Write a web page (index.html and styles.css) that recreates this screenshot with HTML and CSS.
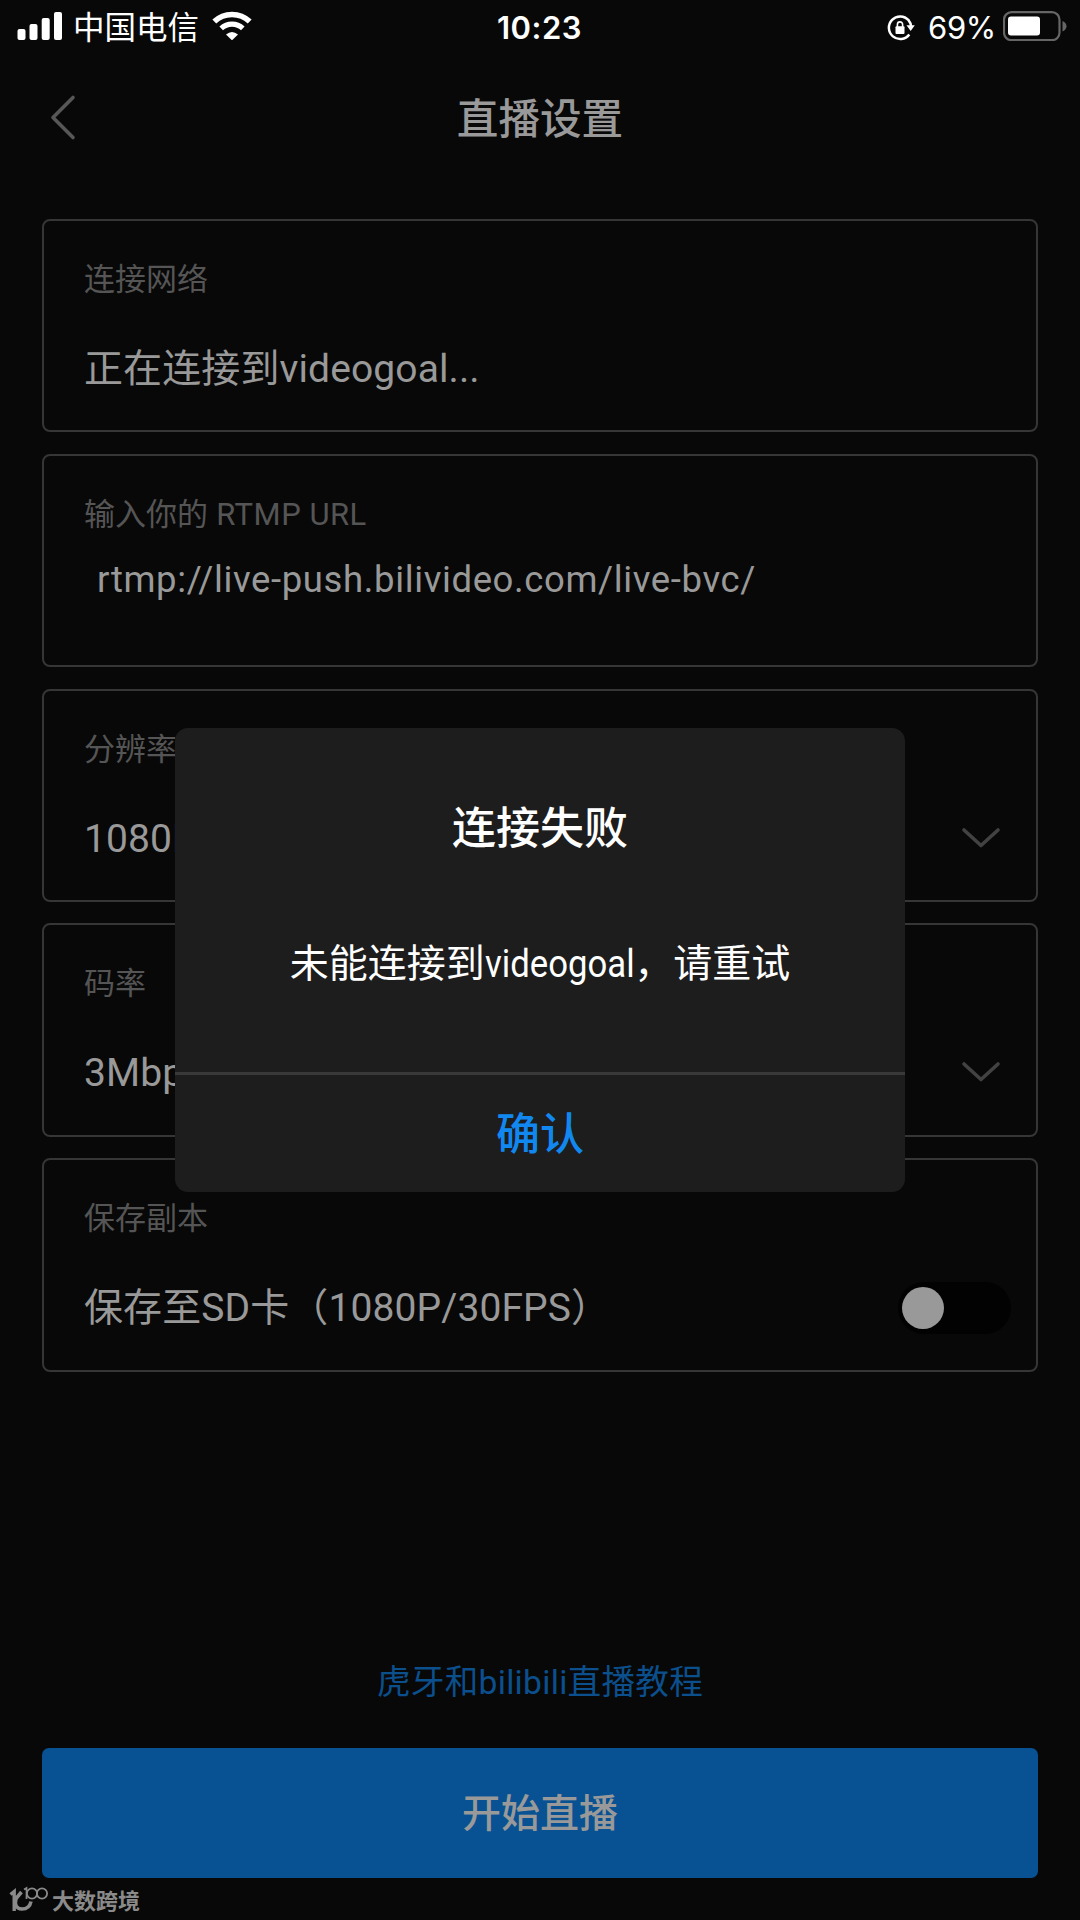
FILE: index.html
```html
<!DOCTYPE html>
<html lang="zh-CN">
<head>
<meta charset="utf-8">
<title>直播设置</title>
<link rel="stylesheet" href="styles.css">
</head>
<body>
<div class="screen">
  <header class="status">
    <div class="status-left">
      <svg class="signal" width="46" height="30" viewBox="0 0 46 30" fill="#fff">
        <rect x="0.5" y="18" width="8" height="11" rx="2"/>
        <rect x="12.5" y="13" width="8" height="16" rx="2"/>
        <rect x="24.7" y="7" width="8" height="22" rx="2"/>
        <rect x="37" y="1" width="8" height="28" rx="2"/>
      </svg>
      <span class="carrier">中国电信</span>
      <svg class="wifi" width="40" height="30" viewBox="0 0 40 30" fill="none" stroke="#fff">
        <path d="M2.3 10.6A25.5 25.5 0 0 1 37.7 10.6" stroke-width="5.600"/>
        <path d="M9.2 17.4A15.6 15.6 0 0 1 30.8 17.4" stroke-width="5.2"/>
        <path d="M14 23.4Q20 18.400 26 23.4L20.600 28.800Q20 29.300 19.400 28.800Z" fill="#fff" stroke="none"/>
      </svg>
    </div>
    <div class="clock">10:23</div>
    <div class="status-right">
      <svg class="lock" width="28" height="26" viewBox="0 0 28 26" fill="none" stroke="#fff">
        <path d="M21.600 5.200A11.300 11.300 0 1 0 22.300 19.400" stroke-width="2.500"/>
        <path d="M21.300 4.900Q24 8 24.100 12" stroke-width="2.500"/>
        <path d="M19.500 10.200H27.800L23.700 16Z" fill="#fff" stroke="none"/>
        <rect x="8.500" y="11.300" width="9" height="7.700" rx="1" fill="#fff" stroke="none"/>
        <path d="M10.400 12V9.500A2.600 2.600 0 0 1 15.600 9.500V12" stroke-width="1.600"/>
      </svg>
      <span class="percent">69%</span>
      <svg class="battery" width="64" height="30" viewBox="0 0 64 30">
        <rect x="1" y="1.200" width="55.500" height="28" rx="7.500" fill="none" stroke="#666" stroke-width="2.200"/>
        <rect x="5" y="5.500" width="32" height="19" rx="3" fill="#fff"/>
        <path d="M59.500 10Q63.500 12 63.500 15.200T59.500 20.500Z" fill="#666"/>
      </svg>
    </div>
  </header>

  <nav class="navbar">
    <svg class="back" width="28" height="48" viewBox="0 0 28 48" fill="none" stroke="#575757" stroke-width="3.600" stroke-linecap="round" stroke-linejoin="round"><path d="M23 3.500L3 23.500L23 43.500"/></svg>
    <h1 class="title">直播设置</h1>
  </nav>

  <main class="cards">
    <section class="card">
      <div class="label">连接网络</div>
      <div class="value">正在连接到videogoal...</div>
    </section>
    <section class="card">
      <div class="label">输入你的<span class="wide"> RTMP URL</span></div>
      <div class="value url">rtmp://live-push.bilivideo.com/live-bvc/</div>
    </section>
    <section class="card">
      <div class="label">分辨率</div>
      <div class="row">
        <div class="value">1080P</div>
        <svg class="chevron" width="40" height="24" viewBox="0 0 40 24"><path d="M3 3L20 18.500L37 3"/></svg>
      </div>
    </section>
    <section class="card">
      <div class="label">码率</div>
      <div class="row">
        <div class="value">3Mbps</div>
        <svg class="chevron" width="40" height="24" viewBox="0 0 40 24"><path d="M3 3L20 18.500L37 3"/></svg>
      </div>
    </section>
    <section class="card">
      <div class="label">保存副本</div>
      <div class="row">
        <div class="value">保存至SD卡（1080P/30FPS）</div>
        <div class="toggle"><div class="knob"></div></div>
      </div>
    </section>
  </main>

  <footer class="actions">
    <a class="guide">虎牙和bilibili直播教程</a>
    <div class="start">开始直播</div>
    <div class="mark">
      <svg width="40" height="28" viewBox="0 0 40 28" fill="none" stroke="#8a8a8a">
        <path d="M1.500 8.500L5.200 5.500V25" stroke-width="3.400"/>
        <path d="M12.500 6L7 12.500Q4.500 22.500 13 23Q20.500 23 22 15.500" stroke-width="3.600"/>
        <path d="M15 3.500L17.500 2V13" stroke-width="1.700"/>
        <circle cx="23" cy="7.500" r="5.100" stroke-width="1.800"/>
        <circle cx="33" cy="7.500" r="5.100" stroke-width="1.800"/>
      </svg>
      <span>大数跨境</span>
    </div>
  </footer>

  <div class="dialog">
    <div class="dialog-title">连接失败</div>
    <div class="dialog-text">未能连接到<span class="narrow">videogoal</span>，请重试</div>
    <div class="confirm">确认</div>
  </div>
</div>
</body>
</html>
```
FILE: styles.css
```css
* { box-sizing: border-box; }
body {
  margin: 0;
  background: #080808;
  font-family: Roboto, "Noto Sans CJK SC", sans-serif;
  color: #999;
}
svg { display: block; flex: none; }
.screen {
  position: relative;
  width: 1080px;
  height: 1920px;
  overflow: hidden;
  display: flex;
  flex-direction: column;
  white-space: nowrap;
}
.status {
  height: 60px;
  padding: 0 13px 0 17px;
  display: grid;
  grid-template-columns: 1fr auto 1fr;
  align-items: start;
  color: #fff;
}
.status-left, .status-right { display: flex; align-items: flex-start; }
.status-right { justify-content: flex-end; }
.signal { margin-top: 11px; }
.carrier { margin-left: 10px; font-size: 31.5px; line-height: 40px; padding-top: 9px; }
.wifi { margin: 11px 0 0 13px; }
.clock { font: 600 31px/40px Inter, sans-serif; padding: 8px 5px 0 0; letter-spacing: 0.5px; }
.lock { margin-top: 15px; }
.percent { margin: 0 7px 0 13px; font: 400 31px/40px Inter, sans-serif; padding-top: 8px; letter-spacing: -0.3px; }
.battery { margin-top: 11px; }

.navbar {
  height: 159px;
  padding: 34px 50px 0;
  display: grid;
  grid-template-columns: 28px 1fr 28px;
  align-items: start;
}
.title { margin: 0; padding-top: 2px; text-align: center; font-size: 41.6px; font-weight: 500; line-height: 48px; }

.cards {
  padding: 0 42px;
  display: flex;
  flex-direction: column;
  gap: 21.4px;
}
.card {
  height: 213.4px;
  border: 2px solid #363636;
  border-radius: 8px;
  padding: 39px 25px 0 40px;
}
.label { font-size: 31px; line-height: 40px; color: #555; }
.wide { letter-spacing: 0.5px; }
.value { margin-top: 44px; font-size: 39px; line-height: 50px; letter-spacing: 0.1px; }
.url { margin-top: 20px; padding-left: 13px; font-size: 36.500px; letter-spacing: 0.620px; }
.row { display: flex; justify-content: space-between; }
.chevron { margin: 57px 10px 0 0; fill: none; stroke: #424242; stroke-width: 3.600; stroke-linecap: round; stroke-linejoin: round; }
.toggle { margin-top: 43px; width: 113px; height: 52px; border-radius: 26px; background: #020202; padding: 5px 4px; }
.knob { width: 42px; height: 42px; border-radius: 50%; background: #999; }

.actions {
  flex: 1;
  padding: 0 42px;
  display: flex;
  flex-direction: column;
  justify-content: flex-end;
}
.guide { text-align: center; font-size: 33.600px; line-height: 40px; letter-spacing: 0.300px; color: #0b4f8d; margin-bottom: 45px; }
.start {
  height: 130px;
  border-radius: 7px;
  background: #085293;
  text-align: center;
  font-size: 39px;
  font-weight: 500;
  line-height: 133px;
}
.mark {
  height: 42px;
  margin-left: -33px;
  padding-top: 8px;
  display: flex;
  gap: 3px;
  font-size: 22px;
  font-weight: 700;
  line-height: 31px;
  color: #8a8a8a;
}

.dialog {
  position: absolute;
  left: 175px;
  top: 728px;
  width: 730px;
  height: 464px;
  border-radius: 13px;
  background: #1d1d1d;
  color: #fff;
  text-align: center;
  display: flex;
  flex-direction: column;
}
.dialog-title { margin-top: 71px; font-size: 44px; font-weight: 500; line-height: 60px; }
.dialog-text { margin-top: 80px; font-size: 39px; line-height: 50px; }
.narrow { display: inline-block; transform: scaleX(0.89); transform-origin: left; margin-right: -18.500px; }
.confirm {
  margin-top: auto;
  height: 120px;
  border-top: 3px solid #393939;
  font-size: 44px;
  font-weight: 500;
  line-height: 121px;
  color: #1188f0;
}
```
